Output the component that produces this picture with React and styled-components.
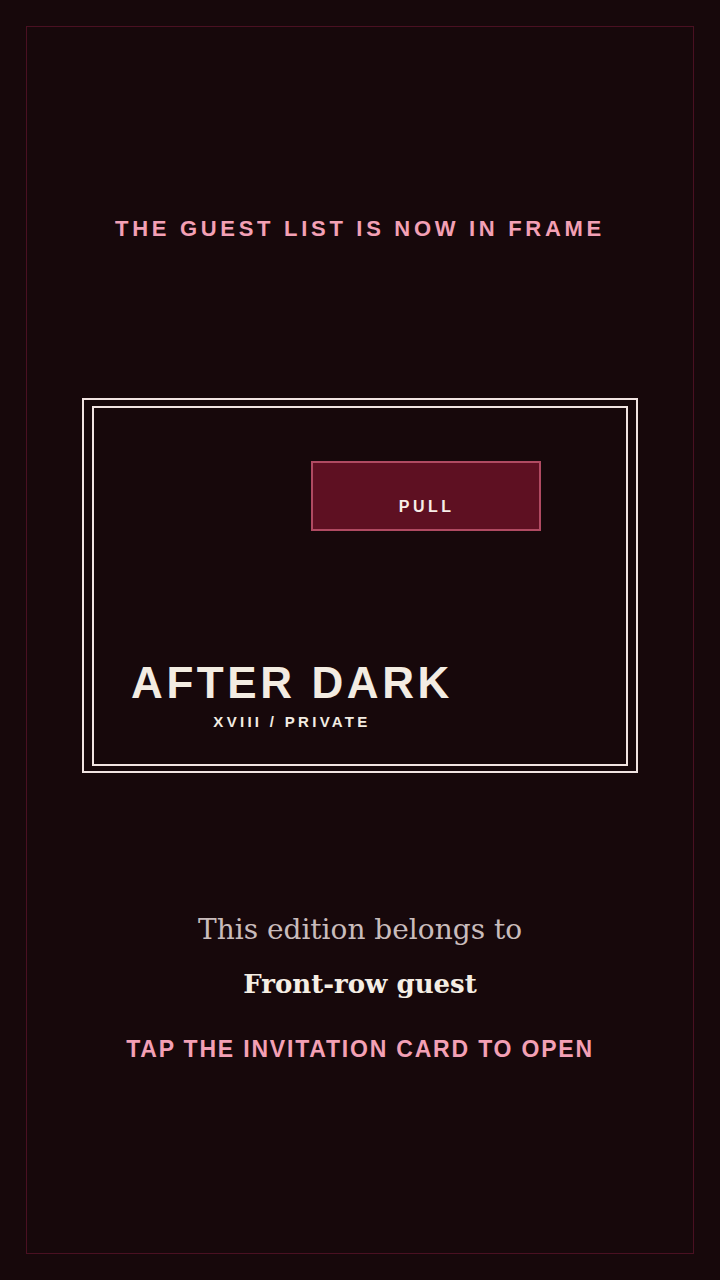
import React from "react";
import styled, { createGlobalStyle } from "styled-components";

const Global = createGlobalStyle`
  html, body {
    margin: 0;
    padding: 0;
    background: #17080b;
  }
  * { box-sizing: border-box; }
`;

const Page = styled.div`
  min-height: 1280px;
  padding: 26px;
  background: #17080b;
`;

const Frame = styled.div`
  height: 1228px;
  border: 1px solid #4a1022;
  display: flex;
  flex-direction: column;
  align-items: center;
  padding-top: 189px;
`;

const Kicker = styled.div`
  font-family: "Liberation Sans", Arial, sans-serif;
  font-weight: 700;
  font-size: ${(p) => p.$size}px;
  letter-spacing: ${(p) => p.$spacing}px;
  color: #f3a0b5;
  text-transform: uppercase;
  margin-top: ${(p) => p.$top || 0}px;
  white-space: nowrap;
`;

const Card = styled.div`
  margin-top: 156px;
  width: 556px;
  height: 375px;
  border: 2px solid #f1e4e2;
  padding: 6px 8px 5px;
  display: flex;
`;

const CardInner = styled.div`
  flex: 1;
  border: 2px solid #f1e4e2;
  display: flex;
  flex-direction: column;
  align-items: flex-start;
  padding: 53px 0 0 37px;
`;

const PullTab = styled.div`
  margin-left: 180px;
  width: 230px;
  height: 70px;
  background: #5e1022;
  border: 2px solid #b04a62;
  display: flex;
  align-items: flex-end;
  justify-content: center;
  padding-bottom: 13px;
  font-family: "Liberation Sans", Arial, sans-serif;
  font-weight: 700;
  font-size: 16px;
  letter-spacing: 3.5px;
  color: #f7eee8;
  text-indent: 1.5px;
`;

const Title = styled.div`
  margin-top: 127px;
  display: flex;
  flex-direction: column;
  align-items: center;
`;

const TitleMain = styled.div`
  font-family: "Liberation Sans", Arial, sans-serif;
  font-weight: 700;
  font-size: 44px;
  letter-spacing: 3.6px;
  color: #f3ece2;
  white-space: nowrap;
`;

const TitleSub = styled.div`
  margin-top: 5px;
  font-family: "Liberation Sans", Arial, sans-serif;
  font-weight: 700;
  font-size: 15px;
  letter-spacing: 3.3px;
  color: #f3ece2;
  white-space: nowrap;
`;

const SerifLine = styled.div`
  font-family: "DejaVu Serif", "Liberation Serif", serif;
  font-size: ${(p) => p.$size}px;
  font-weight: ${(p) => (p.$bold ? 700 : 400)};
  color: ${(p) => p.$color};
  margin-top: ${(p) => p.$top}px;
  white-space: nowrap;
`;

export default function App() {
  return (
    <>
      <Global />
      <Page>
        <Frame>
          <Kicker $size={22} $spacing={3.7}>
            The guest list is now in frame
          </Kicker>
          <Card>
            <CardInner>
              <PullTab>PULL</PullTab>
              <Title>
                <TitleMain>AFTER DARK</TitleMain>
                <TitleSub>XVIII / PRIVATE</TitleSub>
              </Title>
            </CardInner>
          </Card>
          <SerifLine $size={28} $color="#c9bcbc" $top={140}>
            This edition belongs to
          </SerifLine>
          <SerifLine $size={26} $bold $color="#f5eee4" $top={23}>
            Front-row guest
          </SerifLine>
          <Kicker $size={23} $spacing={1.8} $top={37}>
            Tap the invitation card to open
          </Kicker>
        </Frame>
      </Page>
    </>
  );
}
